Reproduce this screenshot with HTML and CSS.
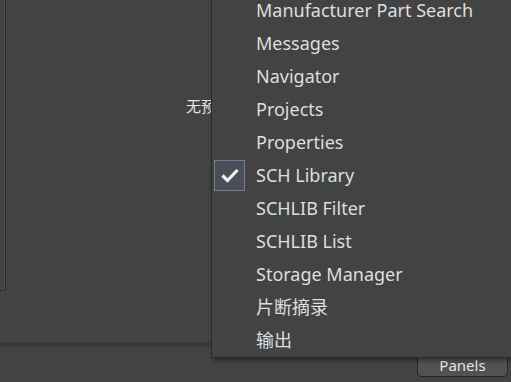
FILE: index.html
```html
<!DOCTYPE html>
<html lang="zh-CN">
  <head>
    <meta charset="UTF-8" />
    <meta name="viewport" content="width=device-width, initial-scale=1.0" />
    <title>Panels</title>
    <link rel="stylesheet" href="styles.css">
  </head>

  <body>
    <div class="workspace">
      <div class="main">
        <div class="side-panel"></div>
        <div class="preview">
          <span class="preview-empty">无预览可用</span>
        </div>
      </div>

      <div class="status-divider"></div>

      <div class="status-bar">
        <button class="panels-btn">Panels</button>
      </div>

      <!-- Panels popup menu -->
      <ul class="panels-menu">
        <li class="menu-item">Manufacturer Part Search</li>
        <li class="menu-item">Messages</li>
        <li class="menu-item">Navigator</li>
        <li class="menu-item">Projects</li>
        <li class="menu-item">Properties</li>
        <li class="menu-item checked">
          <span class="check-box">
            <svg width="18" height="15" viewBox="0 0 18 15">
              <path d="M1.5 7.5 L6.5 12.5 L16.5 2" fill="none" stroke="#f4f4f4" stroke-width="3.2" />
            </svg>
          </span>
          SCH Library
        </li>
        <li class="menu-item">SCHLIB Filter</li>
        <li class="menu-item">SCHLIB List</li>
        <li class="menu-item">Storage Manager</li>
        <li class="menu-item">片断摘录</li>
        <li class="menu-item">输出</li>
      </ul>
    </div>
  </body>
</html>
```

FILE: styles.css
```css
* {
  margin: 0;
  padding: 0;
  box-sizing: border-box;
}

body {
  font-family: "Noto Sans", "Noto Sans CJK SC", sans-serif;
  background-color: #434343;
  color: #dedede;
  overflow: hidden;
}

.workspace {
  position: relative;
  display: flex;
  flex-direction: column;
  width: 511px;
  height: 382px;
}

.main {
  display: flex;
  height: 342px;
}

.side-panel {
  width: 6px;
  height: 291px;
  border-right: 1px solid #2c2c2c;
  border-bottom: 1px solid #2c2c2c;
  box-shadow: inset -1px -1px 0 #4c4c4c;
}

.preview {
  flex: 1;
  padding: 95px 0 0 180px;
}

.preview-empty {
  font-size: 15px;
  color: #e6e6e6;
  white-space: nowrap;
}

.status-divider {
  height: 5px;
  background-color: #393939;
}

.status-bar {
  flex: 1;
  display: flex;
  justify-content: flex-end;
  align-items: flex-end;
  padding: 0 3px 5px 0;
  background-color: #444;
}

.panels-btn {
  width: 91px;
  height: 26px;
  padding-top: 1px;
  background-color: #525252;
  color: #e4e4e4;
  border: 1px solid #262626;
  border-radius: 4px;
  font-family: "Noto Sans", sans-serif;
  font-size: 15px;
}

.panels-menu {
  position: absolute;
  left: 211px;
  top: -7px;
  width: 320px;
  list-style: none;
  background-color: #434343;
  border: 1px solid #2a2a2a;
  box-shadow: 2px 3px 4px rgba(0, 0, 0, 0.35);
}

.menu-item {
  position: relative;
  height: 33px;
  line-height: 33px;
  padding-left: 44px;
  font-size: 18px;
  white-space: nowrap;
}

.check-box {
  position: absolute;
  left: 2px;
  top: 1px;
  width: 31px;
  height: 31px;
  display: flex;
  align-items: center;
  justify-content: center;
  background-color: #4b4e53;
  border: 1px solid #6f7f95;
}
```
